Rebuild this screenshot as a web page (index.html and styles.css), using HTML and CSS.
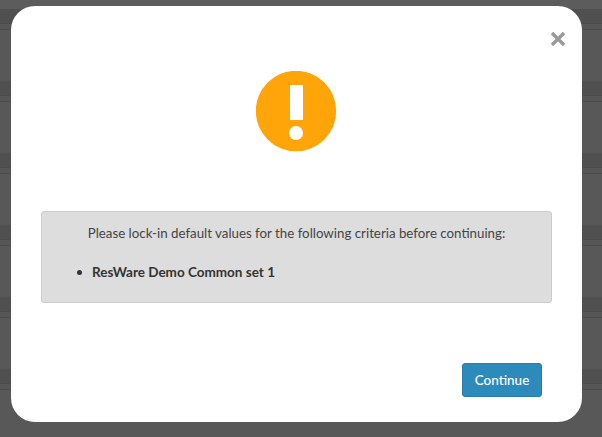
FILE: index.html
```html
<!DOCTYPE html>
<html lang="en">
<head>
<meta charset="utf-8">
<title>Lock-in defaults</title>
<link rel="stylesheet" href="styles.css">
</head>
<body>
<div class="backdrop">
  <div class="top-bar"></div>
  <div class="band"></div>
  <div class="band"></div>
  <div class="band"></div>
  <div class="band"></div>
  <div class="band"></div>
  <div class="band"></div>
</div>
<div class="modal">
  <button class="close" aria-label="Close">
    <svg width="16" height="16" viewBox="0 0 16 16"><path d="M2 2 L14 14 M14 2 L2 14" stroke="#999" stroke-width="3.4" fill="none"/></svg>
  </button>
  <div class="icon-wrap">
    <svg width="81" height="81" viewBox="0 0 81 81">
      <circle cx="40" cy="40" r="40.2" fill="#ffa50a"/>
      <rect x="34" y="14" width="13" height="35" fill="#fff"/>
      <circle cx="40" cy="62" r="7" fill="#fff"/>
    </svg>
  </div>
  <div class="message">
    <p class="lead">Please lock-in default values for the following criteria before continuing:</p>
    <ul class="items"><li class="item">ResWare Demo Common set 1</li></ul>
  </div>
  <div class="actions"><button class="primary">Continue</button></div>
</div>
</body>
</html>
```
FILE: styles.css
```css
html, body { margin: 0; height: 100%; overflow: hidden; }
body { background: #585858; font-family: Lato, sans-serif; color: #444; position: relative; }
.backdrop { position: absolute; inset: 0; display: flex; flex-direction: column; }
.top-bar { height: 9px; flex: none; background: #5c5c5c; }
.band { height: 21px; flex: none; margin-bottom: 51px; box-sizing: border-box; background: linear-gradient(#505050 0 14px, #4c4c4c 14px 15px, #565656 15px); border-bottom: 1px solid #4c4c4c; }
.modal { position: absolute; left: 11px; top: 6px; width: 571px; height: 416px; box-sizing: border-box; background: #fff; border-radius: 24px; padding: 65px 30px 25px; display: flex; flex-direction: column; }
.close { position: absolute; right: 16px; top: 25px; padding: 0; border: 0; background: none; line-height: 0; }
.icon-wrap { display: flex; justify-content: center; }
.message { margin-top: 59px; height: 92px; box-sizing: border-box; background: #ddd; border: 1px solid #ccc; border-radius: 3px; padding: 11px 32px; font-size: 13.3px; line-height: 20px; width: 511px; }
.lead { margin: 0; text-align: center; }
.items { margin: 19px 0 0; padding: 0 0 0 3px; list-style: none; font-size: 13.5px; font-weight: 700; color: #333; }
.item { display: flex; align-items: center; gap: 10px; }
.item::before { content: ""; width: 5px; height: 5px; border-radius: 50%; background: #333; }
.actions { margin-top: auto; display: flex; justify-content: flex-end; padding-right: 10px; }
.primary { width: 80px; height: 34px; background: #2d8bbc; color: #fff; border: 1px solid #2a7da9; border-radius: 3px; font: 500 13.5px Lato, sans-serif; padding: 0; }
```
